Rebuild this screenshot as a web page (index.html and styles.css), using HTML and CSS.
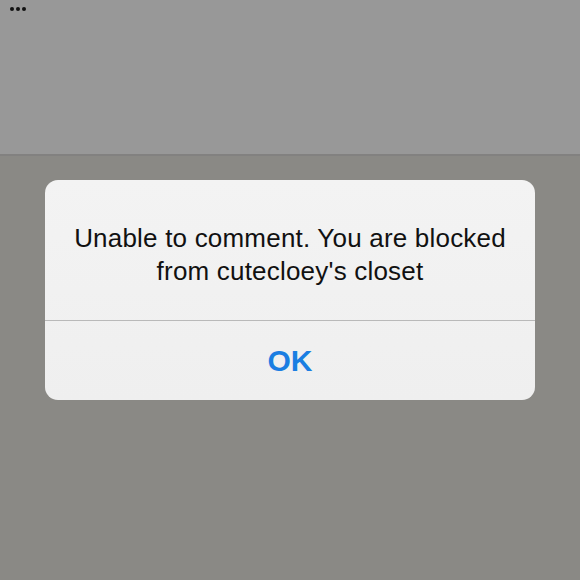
FILE: index.html
```html
<!DOCTYPE html>
<html>
<head>
<meta charset="utf-8">
<link rel="stylesheet" href="styles.css">
</head>
<body>
<div class="screen">
  <header class="topbar">
    <div class="dots"><span></span><span></span><span></span></div>
  </header>
  <main class="backdrop">
    <div class="alert">
      <p class="message">Unable to comment. You are blocked from cutecloey's closet</p>
      <div class="actions"><span class="ok">OK</span></div>
    </div>
  </main>
</div>
</body>
</html>
```

FILE: styles.css
```css
html, body {
  margin: 0;
  padding: 0;
  width: 580px;
  height: 580px;
  overflow: hidden;
  background: #8a8985;
  font-family: "Liberation Sans", Arial, sans-serif;
}
.screen {
  display: flex;
  flex-direction: column;
  width: 580px;
  height: 580px;
}
.topbar {
  height: 156px;
  background: #989898;
  border-bottom: 2px solid #828180;
  box-sizing: border-box;
  flex: none;
}
.dots {
  display: flex;
  gap: 2px;
  padding: 7px 0 0 10px;
}
.dots span {
  width: 4px;
  height: 4px;
  border-radius: 50%;
  background: #111;
}
.backdrop {
  flex: 1;
  background: #8a8985;
  padding: 24px 45px 0 45px;
}
.alert {
  background: linear-gradient(#f3f3f3, #efefef);
  border-radius: 13px;
  height: 220px;
  display: flex;
  flex-direction: column;
  overflow: hidden;
}
.message {
  margin: 0;
  height: 141px;
  box-sizing: border-box;
  padding: 42px 24px 0;
  text-align: center;
  font-size: 26px;
  line-height: 33px;
  letter-spacing: 0.2px;
  color: #111;
  border-bottom: 1px solid #b9b9b9;
}
.actions {
  flex: 1;
  display: flex;
  align-items: center;
  justify-content: center;
}
.ok {
  color: #1a7ee2;
  font-size: 30px;
  font-weight: bold;
}
```
